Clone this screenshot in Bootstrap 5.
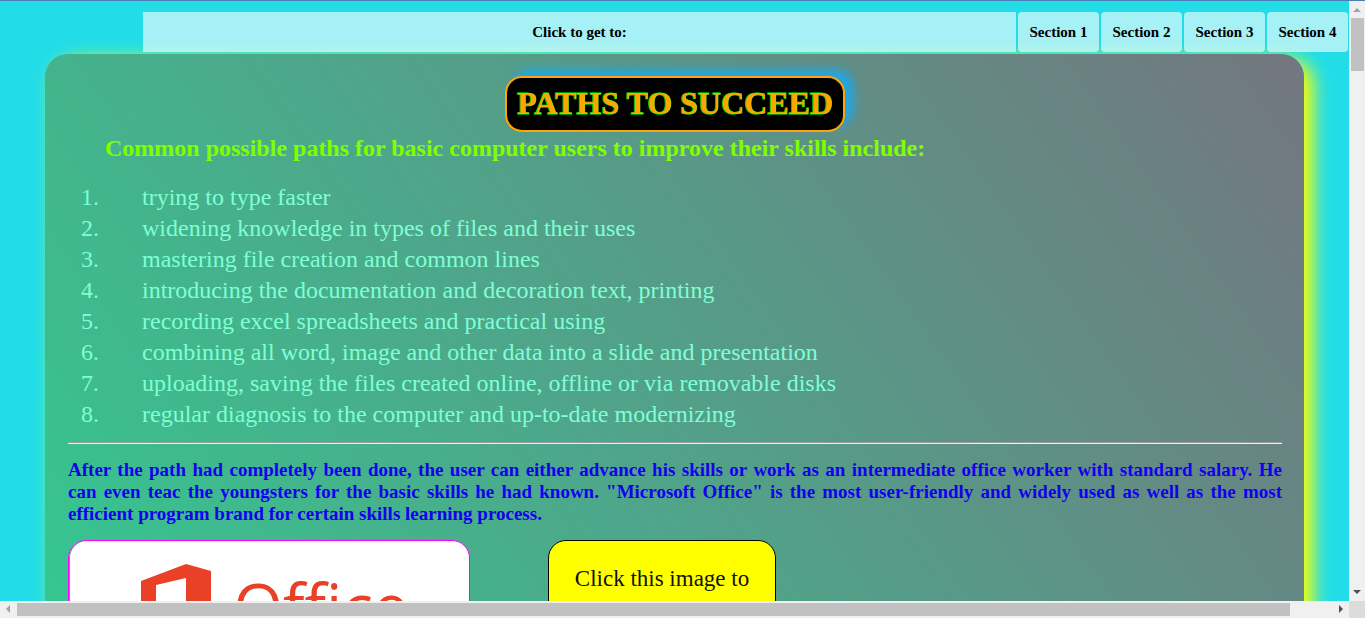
<!DOCTYPE html>
<html lang="en">
<head>
<meta charset="utf-8">
<meta name="viewport" content="width=device-width, initial-scale=1">
<title>Paths to Succeed</title>
<link href="https://cdn.jsdelivr.net/npm/bootstrap@5.3.0/dist/css/bootstrap.min.css" rel="stylesheet">
<style>
  body { font-family: "Liberation Serif", serif; background: #f0f0f0; border-top: 1px solid #4a80b8; }
  .page-body { min-height: 0; }
  .page-view { background: #22dde8; min-width: 0; min-height: 0; padding-top: 11px; }
  .jump-bar { position: relative; z-index: 1; gap: 2px; margin-left: 143px; margin-right: 1px; font-size: 15px; line-height: 20px; font-weight: bold; color: #000; }
  .jump-bar > * { background: rgba(255,255,255,.6); padding: 10px 0; color: #000; text-align: center; text-decoration: none; }
  .jump-bar a { width: 81px; border-radius: 4px; white-space: nowrap; }
  .paths-panel { margin: 2px 45px 0; padding: 22px 22px 0 23px; border-radius: 23px 23px 0 0; background: linear-gradient(55deg, #34c891, #737680); box-shadow: 9px 6px 18px yellow; }
  .page-title { font-size: 32px; line-height: 36px; padding: 7px 10px 9px; border: 2px solid orange; border-radius: 17px; background: #000; color: orange; -webkit-text-stroke: 1px lime; paint-order: stroke fill; box-shadow: 8px -6px 10px #1ea7ea; }
  .subtitle { font-size: 24px; line-height: 28px; color: #80ff00; padding-left: 37px; margin: 2px 0 20px; }
  .path-list { font-size: 24px; line-height: 31px; color: #7fffd4; list-style: none; counter-reset: path; padding-left: 13px; }
  .path-list li { counter-increment: path; display: flex; }
  .path-list li::before { content: counter(path) "."; width: 61px; }
  .divider { border-top: 1px solid #9a9a9a; border-bottom: 1px solid #eee; opacity: 1; height: 2px; margin: 12px 0 15px; }
  .summary { font-size: 19px; line-height: 22px; font-weight: bold; color: #1400f0; text-align: justify; margin-bottom: 15px; }
  .cards { gap: 78px; }
  .office-card { width: 402px; padding: 23px 12px 23px 24px; gap: 22px; border: 1px solid #f0f; border-radius: 18px; background: #fff; box-shadow: inset 1px 0 0 #5f9f9b; }
  .office-word { font: 64px/84px "Open Sans", sans-serif; color: #e94127; }
  .click-card { width: 228px; padding: 24px 20px; border: 1px solid #000; border-radius: 18px; background: #ff0; color: #111; font-size: 23px; line-height: 28px; }
  .scroll-y { width: 16px; }
  .scroll-x { height: 17px; }
  .corner { width: 16px; height: 17px; background: #dcdcdc; }
  .thumb { background: #c1c1c1; }
</style>
<script src="https://cdn.jsdelivr.net/npm/bootstrap@5.3.0/dist/js/bootstrap.bundle.min.js"></script>
</head>
<body class="d-flex flex-column vh-100 overflow-hidden">
  <div class="page-body d-flex flex-grow-1">
    <div class="page-view flex-grow-1 overflow-hidden">
      <nav class="jump-bar d-flex">
        <span class="flex-grow-1">Click to get to:</span>
        <a href="#section1">Section 1</a>
        <a href="#section2">Section 2</a>
        <a href="#section3">Section 3</a>
        <a href="#section4">Section 4</a>
      </nav>
      <main class="paths-panel">
        <div class="d-flex justify-content-center"><h1 class="page-title fw-bold m-0">PATHS TO SUCCEED</h1></div>
        <h2 class="subtitle fw-bold">Common possible paths for basic computer users to improve their skills include:</h2>
        <ol class="path-list mb-0">
          <li>trying to type faster</li>
          <li>widening knowledge in types of files and their uses</li>
          <li>mastering file creation and common lines</li>
          <li>introducing the documentation and decoration text, printing</li>
          <li>recording excel spreadsheets and practical using</li>
          <li>combining all word, image and other data into a slide and presentation</li>
          <li>uploading, saving the files created online, offline or via removable disks</li>
          <li>regular diagnosis to the computer and up-to-date modernizing</li>
        </ol>
        <hr class="divider">
        <p class="summary">After the path had completely been done, the user can either advance his skills or work as an intermediate office worker with standard salary. He can&nbsp;even teac the youngsters for the basic skills he had known. "Microsoft Office" is the most user-friendly and widely used as well as the most efficient program brand for certain skills learning process.</p>
        <div class="cards d-flex align-items-start">
          <div class="office-card d-flex justify-content-center">
            <svg width="70" height="86" viewBox="0 0 70 86" aria-hidden="true"><path fill="#e94127" d="M0 17 45 0 70 7V79L45 86 0 69 45 75V14L15 21V62L0 69Z"/></svg>
            <span class="office-word">Office</span>
          </div>
          <a href="#section1" class="click-card text-center text-decoration-none">Click this image to</a>
        </div>
      </main>
    </div>
    <div class="scroll-y d-flex flex-column align-items-center" aria-hidden="true">
      <svg width="16" height="17" viewBox="0 0 16 17"><path fill="#a3a3a3" d="M4 11 8 7l4 4z"/></svg>
      <div class="thumb" style="width:13px;height:53px"></div>
      <svg class="mt-auto" width="16" height="17" viewBox="0 0 16 17"><path fill="#505050" d="M4 6h8l-4 4z"/></svg>
    </div>
  </div>
  <div class="d-flex" aria-hidden="true">
    <div class="scroll-x flex-grow-1 d-flex align-items-center">
      <svg width="17" height="17" viewBox="0 0 17 17"><path fill="#a3a3a3" d="M10 4v8L6 8z"/></svg>
      <div class="thumb" style="width:94.4%;height:13px"></div>
      <svg class="ms-auto" width="17" height="17" viewBox="0 0 17 17"><path fill="#505050" d="M7 4v8l4-4z"/></svg>
    </div>
    <div class="corner"></div>
  </div>
</body>
</html>
